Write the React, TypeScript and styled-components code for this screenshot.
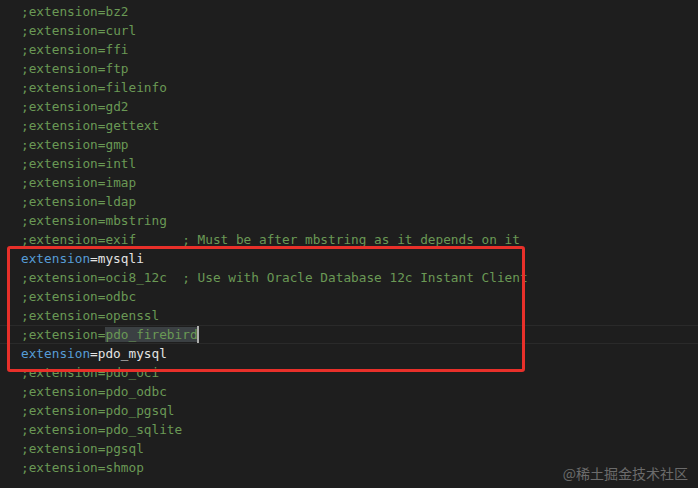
import React from "react";
import styled, { createGlobalStyle } from "styled-components";

const Global = createGlobalStyle`
  html, body { margin: 0; padding: 0; background: #1e1e1e; }
  body { width: 698px; height: 488px; overflow: hidden; }
`;

const Editor = styled.div`
  position: relative;
  width: 698px;
  height: 488px;
  background: #1e1e1e;
  padding-top: 1.5px;
  box-sizing: border-box;
  font-family: "DejaVu Sans Mono", "Liberation Mono", monospace;
  font-size: 12.75px;
  overflow: hidden;
`;

const Line = styled.div<{ $current?: boolean }>`
  height: 19px;
  line-height: 19px;
  padding-left: 21px;
  white-space: pre;
  box-sizing: border-box;
  ${(p) =>
    p.$current
      ? `border-top: 1px solid #2a2a2a; border-bottom: 1px solid #2a2a2a; line-height: 17px;`
      : ""}
`;

const Comment = styled.span`
  color: #6a9955;
`;

const Key = styled.span`
  color: #569cd6;
`;

const Value = styled.span`
  color: #e4e4e4;
`;

const Selected = styled.span`
  background: #3b4043;
  color: #6a9955;
`;

const Cursor = styled.span`
  display: inline-block;
  width: 2px;
  height: 17px;
  margin-left: -1px;
  vertical-align: top;
  background: #aeafad;
`;

const Highlight = styled.div`
  position: absolute;
  left: 7px;
  top: 246px;
  width: 518px;
  height: 126px;
  box-sizing: border-box;
  border: 3px solid #e8302a;
  border-radius: 3px;
  pointer-events: none;
`;

const Watermark = styled.div`
  position: absolute;
  right: 10px;
  bottom: 7px;
  color: #6b6b6b;
  font-family: "Noto Sans CJK SC", "Noto Sans", sans-serif;
  font-size: 14px;
  line-height: 16px;
  letter-spacing: 0px;
`;

const commented = [
  "bz2", "curl", "ffi", "ftp", "fileinfo", "gd2", "gettext", "gmp", "intl",
  "imap", "ldap", "mbstring",
];

const tail = ["pdo_oci", "pdo_odbc", "pdo_pgsql", "pdo_sqlite", "pgsql", "shmop"];

export default function App() {
  return (
    <>
      <Global />
      <Editor>
        {commented.map((n) => (
          <Line key={n}>
            <Comment>;extension={n}</Comment>
          </Line>
        ))}
        <Line>
          <Comment>;extension=exif      ; Must be after mbstring as it depends on it</Comment>
        </Line>
        <Line>
          <Key>extension</Key>
          <Value>=mysqli</Value>
        </Line>
        <Line>
          <Comment>;extension=oci8_12c  ; Use with Oracle Database 12c Instant Client</Comment>
        </Line>
        <Line>
          <Comment>;extension=odbc</Comment>
        </Line>
        <Line>
          <Comment>;extension=openssl</Comment>
        </Line>
        <Line $current>
          <Comment>;extension=</Comment>
          <Selected>pdo_firebird</Selected>
          <Cursor />
        </Line>
        <Line>
          <Key>extension</Key>
          <Value>=pdo_mysql</Value>
        </Line>
        {tail.map((n) => (
          <Line key={n}>
            <Comment>;extension={n}</Comment>
          </Line>
        ))}
        <Highlight />
        <Watermark>@稀土掘金技术社区</Watermark>
      </Editor>
    </>
  );
}
